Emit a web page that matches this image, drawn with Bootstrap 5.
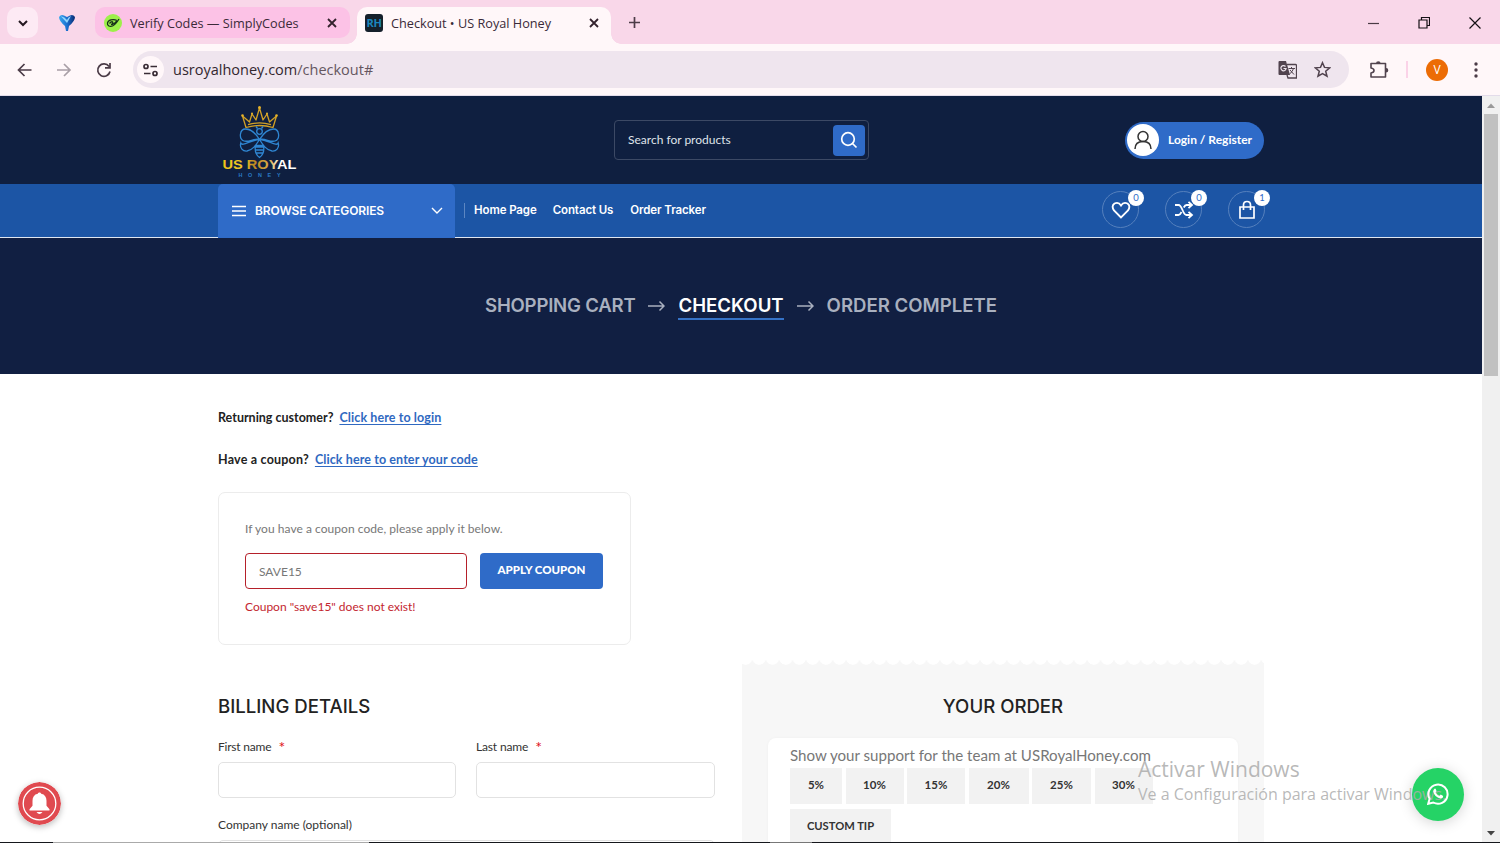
<!DOCTYPE html>
<html lang="en">
<head>
<meta charset="utf-8">
<meta name="viewport" content="width=device-width, initial-scale=1">
<title>Checkout • US Royal Honey</title>
<link rel="stylesheet" href="https://cdn.jsdelivr.net/npm/bootstrap@5.3.0/dist/css/bootstrap.min.css">
<style>
:root{--navy:#0f1f40;--blue:#2f6bc8;--bar:#1c55a5;--jost:Lato,"Open Sans",sans-serif;--grot:Inter,"Liberation Sans",sans-serif;--ui:"Open Sans","Noto Sans",sans-serif}
body{height:843px;overflow:hidden;font-family:var(--jost);font-size:12px;line-height:20px;color:#333;background:#fff}
svg{display:block;flex:none}
.t{white-space:nowrap;display:inline-block}
/* browser window */
.tabstrip{height:44px;background:#f9d7e9;font-family:var(--ui);font-size:12.7px;color:#3a2a38;padding:7px 0 0 7px}
.tabmenu{width:31px;height:31px;border-radius:10px;background:#fdeaf4}
.pinned{margin:4px 0 0 20px}
.tab-off{width:255px;height:31px;margin-left:19px;border-radius:10px;background:#fcc2e6;padding:0 13px 0 9px}
.tab-on{width:254px;height:37px;margin-left:7px;border-radius:10px 10px 0 0;background:#fff7f9;padding:0 12px 6px 8px;position:relative}
.tab-on::before,.tab-on::after{content:"";position:absolute;bottom:0;width:10px;height:10px}
.tab-on::before{left:-10px;background:radial-gradient(circle at 0 0,transparent 9.5px,#fff7f9 10px)}
.tab-on::after{right:-10px;background:radial-gradient(circle at 100% 0,transparent 9.5px,#fff7f9 10px)}
.rh{width:18px;height:18px;border-radius:3px;background:#15202b;color:#1b86bd;font:700 11px/18px var(--ui);letter-spacing:-.3px}
.toolbar{height:52px;background:#fff7f9;border-bottom:1px solid #e3dcea;padding:0 16px 0 16px}
.omni{width:1216px;height:37px;border-radius:19px;background:#efe5ee;font:400 14.5px/37px var(--ui);color:#33272f}
.site-info{width:27px;height:27px;border-radius:50%;background:#fff7f9}
.avatar{width:22px;height:22px;border-radius:50%;background:#ec6c05;color:#fff;font:400 12px/22px var(--ui)}
/* site */
.viewport{height:746px;overflow:hidden}
.site{width:1482px;position:relative}
.wrap{width:1046px;margin:0 auto}
.masthead{height:88px;background:var(--navy)}
.search{width:255px;height:40px;margin-left:316px;border:1px solid #3c4965;border-radius:4px;padding:0 3px 0 13px;color:#dfe3ea}
.search-go{width:32px;height:31px;border-radius:4px;background:var(--blue)}
.login{width:139px;height:37px;border-radius:19px;background:var(--blue);color:#fff;font-weight:700;padding-left:2px}
.face{width:32px;height:32px;border-radius:50%;background:#fff}
.navrow{height:54px;background:var(--bar);border-bottom:1px solid #dfe6f0}
.browse{width:237px;height:54px;margin-bottom:-1px;border-radius:5px 5px 0 0;background:var(--blue);color:#fff;font:600 12px/52px var(--grot);letter-spacing:-.11px;padding:0 12px 0 14px}
.links{font:600 11.5px/48px var(--grot);letter-spacing:-.1px;color:#fff;height:51px}
.links .sep{width:1px;height:15px;background:#5c86c2;margin:1px 9px 0 9px}
.ring{width:37px;height:37px;border:1px solid #5580bd;border-radius:50%;position:relative}
.count{position:absolute;top:-2px;right:-6px;width:16px;height:16px;border-radius:50%;background:#fff;color:#2f6bc8;font:400 9.5px/16px var(--jost);text-align:center}
.steps{height:136px;background:#111f42;color:#a9b0bf;font:600 18.6px/25px var(--grot);padding-bottom:2px}
.steps .tight{letter-spacing:-.22px}
.steps .on{color:#fff;box-shadow:0 2px 0 #3572c6}
.q{font-weight:700;font-size:12.5px;color:#222}
.q a{color:#3069c1;text-underline-offset:2px;letter-spacing:.1px}
.coupon{width:413px;height:153px;border:1px solid #ececec;border-radius:7px;padding:26px}
.code{width:222px;height:36px;border:1px solid #b5202a;border-radius:4px;padding:0 13px;color:#777;line-height:35px}
.apply{width:123px;height:36px;border-radius:4px;background:var(--blue);color:#fff;font-weight:900;font-size:11.5px;line-height:34px}
.sect{font:500 18.6px/24px var(--grot);color:#222}
.field{height:36px;border:1px solid #e2e2e2;border-radius:5px;margin-top:5px}
.req{color:#e01020;font-size:16px;line-height:18px;vertical-align:-2px}
.order{width:522px;height:185px;background:#f7f7f7;padding:29px 26px 0}
.torn{width:522px;height:8px;background:radial-gradient(circle at 50% 1px,#fff 6.4px,#f7f7f7 7px) -3px 0/13.4px 8px repeat-x}
.tips{height:120px;background:#fff;border-radius:8px;box-shadow:0 0 3px #0000000a;padding:6px 22px;color:#777;margin-top:20px}
.support{font-size:15.1px;line-height:22px}
.tip{height:36px;background:#f2f2f2;color:#333;font-weight:700;font-size:11.5px;line-height:34px;text-align:center}
.sb{width:18px;background:#f0f0f0}
.thumb{height:262px;width:14px;background:#c1c1c1}
.bell{position:absolute;left:18px;top:686px;box-shadow:0 2px 6px #0004;border-radius:50%}
.wa{position:absolute;left:1412px;top:672px;width:52px;height:53px;border-radius:50%;background:#25d366;box-shadow:0 2px 14px #0000002b}
.waicon{position:absolute;left:1427px;top:687px}
.wm{position:absolute;left:1138px;top:659px;color:#acacacd9;font:400 21px/28px var(--ui)}
.wm .sub{display:block;font:400 16px/22px var(--ui)}
.foot{height:1px;background:linear-gradient(90deg,#15171c 53px,#aaa 53px 369px,#15171c 369px 770px,#777 770px 812px,#15171c 812px)}
</style>
</head>
<body class="d-flex flex-column">
<header class="tabstrip d-flex">
  <div class="tabmenu d-flex align-items-center justify-content-center"><svg width="12" height="12" fill="none" stroke="#241820" stroke-width="2"><path d="M2 4l4 4 4-4"/></svg></div>
  <svg class="pinned" width="18" height="24" viewBox="0 0 18 24"><defs><linearGradient id="vg"><stop stop-color="#39a9ee"/><stop offset=".5" stop-color="#1c6fd0"/><stop offset="1" stop-color="#082b70"/></linearGradient></defs><path d="M1 6Q3 3 6 4.500L9 6 12 4.500Q15 3 17 6 17 10 11 15L10 20H8L7 15Q1 10 1 6Z" fill="url(#vg)"/><path d="M3 5.500Q6 5 9 9 10 6 13 5L9 12z" fill="#8fd4fb"/></svg>
  <div class="tab-off d-flex align-items-center"><svg width="18" height="18"><circle cx="9" cy="9" r="9" fill="#9df04a"/><path d="M13 6.500C9 4.500 4 6 3.500 9S6 13 8.500 12 12.500 9 15 5M5.500 9.500C8 6.500 10 8 8 10S12 9 12.500 7" fill="none" stroke="#17301a" stroke-width="1.300"/></svg><span class="t ms-2">Verify Codes — SimplyCodes</span><svg class="ms-auto" width="10" height="10" stroke="#33222d" stroke-width="1.800"><path d="M1 1l8 8M9 1l-8 8"/></svg></div>
  <div class="tab-on d-flex align-items-center"><div class="rh text-center">RH</div><span class="t ms-2">Checkout • US Royal Honey</span><svg class="ms-auto" width="10" height="10" stroke="#33222d" stroke-width="1.800"><path d="M1 1l8 8M9 1l-8 8"/></svg></div>
  <svg style="margin:9px 0 0 17px" width="13" height="13" stroke="#4d3c48" stroke-width="1.700"><path d="M6.500 1v11M1 6.500h11"/></svg>
  <div class="ms-auto d-flex" style="gap:39px;padding:9px 19px 0 0"><svg width="12" height="13" stroke="#4a3a44" stroke-width="1.200"><path d="M1 7.500h11"/></svg><svg width="12" height="13" fill="none" stroke="#151015" stroke-width="1.200"><path d="M1 4h8v8H1zM3.500 4V1.500h8v8H9"/></svg><svg width="12" height="13" stroke="#151015" stroke-width="1.200"><path d="M.5 1.500l11 11M11.500 1.500l-11 11"/></svg></div>
</header>
<div class="toolbar d-flex align-items-center">
  <svg width="17" height="16" viewBox="0 0 17 16" fill="none" stroke="#4b3b47" stroke-width="1.700"><path d="M15.500 8H3M8.500 2L2.500 8l6 6"/></svg>
  <svg style="margin-left:23px" width="17" height="16" viewBox="0 0 17 16" fill="none" stroke="#a99fa6" stroke-width="1.700"><path d="M1 8h12.500M8 2l6 6-6 6"/></svg>
  <svg style="margin-left:23px" width="16" height="16" viewBox="0 0 16 16" fill="none" stroke="#4b3b47" stroke-width="1.700"><path d="M13 4.500A6.200 6.200 0 1 0 14 9.500M14 1v4.800H9"/></svg>
  <div class="omni d-flex align-items-center" style="margin-left:21px;padding:0 18px 0 4px"><div class="site-info d-flex align-items-center justify-content-center"><svg width="15" height="14" fill="none" stroke="#3a2d36" stroke-width="1.700"><circle cx="3" cy="3.500" r="2"/><path d="M7.500 3.500H14M1 10.500h6.500"/><circle cx="12" cy="10.500" r="2"/></svg></div>
    <span class="t" style="margin-left:9px">usroyalhoney.com<span style="color:#65565f">/checkout#</span></span>
    <svg class="ms-auto" width="19" height="20" viewBox="0 0 19 20"><path d="M1.500 1H8l4 14H1.500a1 1 0 0 1-1-1V2a1 1 0 0 1 1-1z" fill="#51434e"/><path d="M9 4.500h8.500a1 1 0 0 1 1 1V18H10L9 15" fill="none" stroke="#51434e" stroke-width="1.300"/><path d="M7.500 6.500a2.600 2.600 0 1 0 .6 2H5.500" fill="none" stroke="#efe5ee" stroke-width="1.200"/><path d="M10.500 8.500H17M13.500 7v1.500M15.500 8.500Q14.500 12 11.500 14M12 10l4 4.500" fill="none" stroke="#51434e"/></svg>
    <svg style="margin-left:17px" width="17" height="17" viewBox="0 0 17 17" fill="none" stroke="#51434e" stroke-width="1.500"><path d="M8.500 1.700l2 4.700 5.200.4-4 3.400 1.300 5-4.500-2.700L4 15.200l1.300-5-4-3.400 5.200-.4z"/></svg></div>
  <svg style="margin-left:20px" width="20" height="20" viewBox="0 0 20 20"><path d="M2 3.500h14.500V17H2v-4q3-.5 3-2.500T2 8z" fill="none" stroke="#51434e" stroke-width="1.600" stroke-linejoin="round"/><path d="M7 3.500a2.300 2.300 0 0 1 4.600 0zM17 8a2.300 2.300 0 0 1 0 4.600z" fill="#51434e"/></svg>
  <div style="width:2px;height:17px;background:#fbd3e8;margin-left:17px"></div><div class="avatar text-center" style="margin-left:18px">V</div>
  <svg style="margin-left:26px" width="4" height="16" fill="#4b3b47"><circle cx="2" cy="2" r="1.700"/><circle cx="2" cy="8" r="1.700"/><circle cx="2" cy="14" r="1.700"/></svg>
</div>
<div class="viewport d-flex">
<main class="site">
  <div class="masthead"><div class="wrap d-flex align-items-center h-100">
    <svg width="80" height="76" viewBox="0 0 80 76" style="margin-top:2px"><defs><linearGradient id="gold" gradientUnits="userSpaceOnUse" x1="5" x2="78" y1="0" y2="0"><stop stop-color="#eec617"/><stop offset=".3" stop-color="#efc52a"/><stop offset=".42" stop-color="#bd8720"/><stop offset=".64" stop-color="#d8ac48"/><stop offset=".78" stop-color="#fff"/></linearGradient></defs>
      <g fill="none" stroke="#d2a126" stroke-width="1.300" stroke-linejoin="round"><path d="M28 24.500L24.500 13l7 6L34 11l4 6L41.500 5l3.500 12 4-6 2.500 8 7-6L55 24.500Q41.500 20.500 28 24.500zM30 21.700q11.500-3.500 23 0"/></g><g fill="#e6b32b"><circle cx="41.500" cy="4.500" r="1.500"/><circle cx="24.500" cy="12.500" r="1.300"/><circle cx="58.500" cy="12.500" r="1.300"/><circle cx="34" cy="10.500" r="1"/><circle cx="49" cy="10.500" r="1"/></g>
      <g fill="none" stroke="#2f86d2" stroke-width="1.300"><circle cx="41.500" cy="28.500" r="2.800"/><path d="M39.500 25.500l-1.500-2M43.500 25.500l1.500-2M41.500 36.500C38 31 33 26 27.500 26c-6 0-7 10-1.500 12 5 1.500 10-3 15.500-1.500C47 35 52 39.500 57 38c5.500-2 4.500-12-1.500-12-5.500 0-10.500 5-14 10.500zM41.500 36.500C33 37 24 44 22.800 40c-1.500 5 2.200 8.500 6.200 8 6-1 9-6 12.500-11.500C45 42 48 47 54 48c4 .5 7.700-3 6.200-8C59 44 50 37 41.500 36.500zM37.500 44h8M37.300 47h8.500M38.200 50h6.800M37.500 42.500q-1.500 8 4 12 5.500-4 4-12z"/></g>
      <text x="4.500" y="65.800" font-family="Liberation Sans,sans-serif" font-size="13.300" font-weight="700" fill="url(#gold)" textLength="74" lengthAdjust="spacingAndGlyphs">US ROYAL</text><text x="20.500" y="73.500" font-family="Liberation Sans,sans-serif" font-size="5.400" font-weight="700" fill="#2a7ac4" textLength="42">HONEY</text></svg>
    <div class="search d-flex align-items-center justify-content-between"><span class="t">Search for products</span><span class="search-go d-flex align-items-center justify-content-center"><svg width="18" height="18" fill="none" stroke="#fff" stroke-width="1.700"><circle cx="8" cy="8" r="6.300"/><path d="M12.500 12.500l4 4"/></svg></span></div>
    <div class="login d-flex align-items-center ms-auto"><div class="face d-flex align-items-center justify-content-center"><svg width="20" height="20" fill="none" stroke="#333" stroke-width="1.500"><circle cx="10" cy="6.500" r="5"/><path d="M2 19q0-7.500 8-7.500t8 7.500"/></svg></div><span class="t" style="margin-left:9px">Login / Register</span></div>
  </div></div>
  <nav class="navrow"><div class="wrap d-flex">
    <div class="browse d-flex align-items-center"><svg width="14" height="12" stroke="#fff" stroke-width="1.600"><path d="M0 1.500h14M0 6h14M0 10.500h14"/></svg><span class="t" style="margin-left:9px">BROWSE CATEGORIES</span><svg class="ms-auto" width="12" height="8" fill="none" stroke="#fff" stroke-width="1.400"><path d="M1 1l5 5 5-5"/></svg></div>
    <div class="links d-flex align-items-center"><span class="sep"></span><span class="t">Home Page</span><span class="t" style="margin-left:16px">Contact Us</span><span class="t" style="margin-left:17px">Order Tracker</span></div>
    <div class="d-flex ms-auto" style="gap:26px;padding-top:7px;margin-right:-1px">
      <div class="ring d-flex align-items-center justify-content-center"><svg width="20" height="18" fill="none" stroke="#fff" stroke-width="1.800"><path d="M10 16.500L3 9.500Q0 5 3.500 2.500 7.500.5 10 4.500 12.500.5 16.500 2.500 20 5 17 9.500z"/></svg><span class="count">0</span></div>
      <div class="ring d-flex align-items-center justify-content-center"><svg width="20" height="18" fill="none" stroke="#fff" stroke-width="1.800"><path d="M1 4h3.500q2 0 4 5t4 5H18M1 14h3.500q1.500 0 3-3M9.800 6.500Q11 4 12.500 4H18M14.500.8L18 4l-3.500 3.200M14.500 10.800L18 14l-3.500 3.200"/></svg><span class="count">0</span></div>
      <div class="ring d-flex align-items-center justify-content-center"><svg width="18" height="20" fill="none" stroke="#fff" stroke-width="1.700"><path d="M2 7h14v11H2zM5.500 10V5q0-3.500 3.500-3.500T12.500 5v5"/></svg><span class="count">1</span></div>
    </div></div></nav>
  <div class="steps d-flex align-items-center justify-content-center"><span class="t tight">SHOPPING CART</span><svg style="margin:1px 13px 0" width="17" height="12" fill="none" stroke="#a9b0bf" stroke-width="1.500"><path d="M0 6h16M11.500 1.500L16 6l-4.500 4.500"/></svg><span class="t on">CHECKOUT</span><svg style="margin:1px 13px 0" width="17" height="12" fill="none" stroke="#a9b0bf" stroke-width="1.500"><path d="M0 6h16M11.500 1.500L16 6l-4.500 4.500"/></svg><span class="t">ORDER COMPLETE</span></div>
  <div class="wrap">
    <div class="q" style="padding-top:34px"><span class="t">Returning customer?</span><a class="t" style="margin-left:6px" href="#">Click here to login</a></div>
    <div class="q" style="padding-top:22px"><span class="t" style="letter-spacing:.2px">Have a coupon?</span><a class="t" style="margin-left:6px" href="#">Click here to enter your code</a></div>
    <div class="coupon" style="margin-top:22px"><div style="color:#777;letter-spacing:.04px"><span class="t">If you have a coupon code, please apply it below.</span></div>
      <div class="d-flex" style="gap:13px;margin-top:14px"><div class="code"><span class="t">SAVE15</span></div><div class="apply text-center"><span class="t">APPLY COUPON</span></div></div>
      <div style="color:#c32630;margin-top:8px"><span class="t">Coupon "save15" does not exist!</span></div></div>
    <div class="d-flex justify-content-between" style="margin-top:12px">
      <div style="width:497px;padding-top:37px"><div class="sect"><span class="t">BILLING DETAILS</span></div>
        <div class="d-flex" style="gap:20px;margin-top:19px"><div style="width:238px"><div style="height:20px"><span class="t" style="letter-spacing:-.2px">First name</span> <span class="req ms-1">*</span></div><div class="field"></div></div><div style="width:239px"><div style="height:20px"><span class="t" style="letter-spacing:-.15px">Last name</span> <span class="req ms-1">*</span></div><div class="field"></div></div></div>
        <div style="margin-top:17px"><span class="t">Company name (optional)</span><div class="field"></div></div></div>
      <div><div class="torn"></div><div class="order"><div class="sect text-center"><span class="t">YOUR ORDER</span></div>
        <div class="tips"><div class="support"><span class="t">Show your support for the team at USRoyalHoney.com</span></div>
          <div class="d-flex" style="gap:3.500px;margin-top:2px"><div class="tip" style="width:52px">5%</div><div class="tip" style="width:58px">10%</div><div class="tip" style="width:58px">15%</div><div class="tip" style="width:60px">20%</div><div class="tip" style="width:59px">25%</div><div class="tip" style="width:58px">30%</div></div>
          <div class="tip" style="width:101px;margin-top:5px;font-size:11.200px">CUSTOM TIP</div></div></div></div>
    </div>
  </div>
  <svg class="bell" width="43" height="43" viewBox="0 0 43 43"><circle cx="21.500" cy="21.500" r="21.500" fill="#e04a50"/><circle cx="21.500" cy="21.500" r="16.300" fill="none" stroke="#fff" stroke-width="1.300"/><path d="M21.500 10.500c1 0 1.500.6 1.700 1.300 3.600.7 5.300 3.300 5.300 7v5l3 3.500v1.200h-20v-1.200l3-3.500v-5c0-3.700 1.700-6.300 5.300-7 .2-.7.700-1.300 1.700-1.300zM18.500 30h6q-3 4-6 0z" fill="#fff"/></svg>
  <div class="wa"></div>
  <div class="wm"><span class="t">Activar Windows</span><span class="t sub">Ve a Configuración para activar Windows.</span></div>
  <svg class="waicon" width="22" height="22" viewBox="0 0 22 22"><path d="M1.200 20.800l1.400-5A9.600 9.600 0 1 1 6.300 19.500z" fill="none" stroke="#fff" stroke-width="2"/><path d="M7.500 5.800q.8-.5 1.200.2l.8 1.900q0 .5-.9 1.500 1.300 2.500 3.900 3.500l1.200-1.300 2.500 1.300q.2 2.300-2.200 2.600-6.500-.7-7.800-7.200 0-1.500 1.300-2.500z" fill="#fff"/></svg>
</main>
<div class="sb d-flex flex-column align-items-center"><svg width="10" height="18" fill="#999"><path d="M1 12h8L5 7.500z"/></svg><div class="thumb"></div><svg class="mt-auto" width="10" height="18" fill="#444"><path d="M1 7h8l-4 4.500z"/></svg></div>
</div>
<div class="foot"></div>
<script src="https://cdn.jsdelivr.net/npm/bootstrap@5.3.0/dist/js/bootstrap.bundle.min.js"></script>
</body>
</html>
